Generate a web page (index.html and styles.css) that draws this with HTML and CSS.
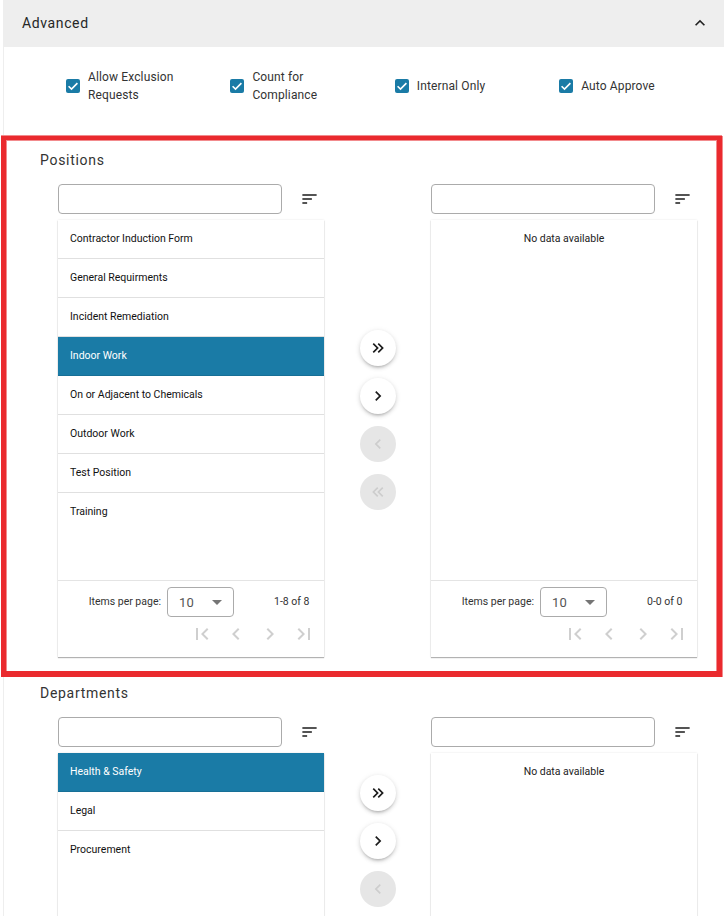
FILE: index.html
```html
<!DOCTYPE html>
<html lang="en">
<head>
<meta charset="utf-8">
<title>Advanced</title>
<link rel="stylesheet" href="styles.css">
</head>
<body>
<svg class="sprite" width="0" height="0" aria-hidden="true">
  <symbol id="i-sort" viewBox="0 0 24 24"><path d="M3 18h6v-2H3v2zM3 6v2h18V6H3zm0 7h12v-2H3v2z"/></symbol>
  <symbol id="i-dr" viewBox="0 0 24 24"><path d="M5.59,7.41L7,6L13,12L7,18L5.59,16.59L10.17,12L5.59,7.41M11.59,7.41L13,6L19,12L13,18L11.59,16.59L16.17,12L11.59,7.41Z"/></symbol>
  <symbol id="i-dl" viewBox="0 0 24 24"><path d="M18.41,7.41L17,6L11,12L17,18L18.41,16.59L13.83,12L18.41,7.41M12.41,7.41L11,6L5,12L11,18L12.41,16.59L7.83,12L12.41,7.41Z"/></symbol>
  <symbol id="i-r" viewBox="0 0 24 24"><path d="M8.59,16.58L13.17,12L8.59,7.41L10,6L16,12L10,18L8.59,16.58Z"/></symbol>
  <symbol id="i-l" viewBox="0 0 24 24"><path d="M15.41,16.58L10.83,12L15.41,7.41L14,6L8,12L14,18L15.41,16.58Z"/></symbol>
  <symbol id="i-first" viewBox="0 0 24 24"><path d="M18.41,16.59L13.82,12L18.41,7.41L17,6L11,12L17,18L18.41,16.59M6,6H8V18H6V6Z"/></symbol>
  <symbol id="i-last" viewBox="0 0 24 24"><path d="M5.59,7.41L10.18,12L5.59,16.59L7,18L13,12L7,6L5.59,7.41M16,6H18V18H16V6Z"/></symbol>
  <symbol id="i-up" viewBox="0 0 24 24"><path d="M12 8l-6 6 1.41 1.41L12 10.83l4.59 4.58L18 14z"/></symbol>
  <symbol id="i-check" viewBox="0 0 14 14"><path d="M2.6 7.2l2.9 2.9 5.9-6" fill="none" stroke="#fff" stroke-width="1.6"/></symbol>
</svg>

<main class="panel">
  <header class="acc-head">
    <span class="acc-title">Advanced</span>
    <svg class="acc-icon"><use href="#i-up"/></svg>
  </header>

  <div class="checks">
    <label class="check"><span class="box"><svg><use href="#i-check"/></svg></span><span>Allow Exclusion Requests</span></label>
    <label class="check"><span class="box"><svg><use href="#i-check"/></svg></span><span>Count for Compliance</span></label>
    <label class="check"><span class="box"><svg><use href="#i-check"/></svg></span><span>Internal Only</span></label>
    <label class="check"><span class="box"><svg><use href="#i-check"/></svg></span><span>Auto Approve</span></label>
  </div>

  <section class="picker">
    <h2 class="picker-title">Positions</h2>
    <div class="picker-body">
      <div class="col">
        <div class="tools"><input class="search" type="text" aria-label="Search"><svg class="sort"><use href="#i-sort"/></svg></div>
        <div class="card">
          <ul class="rows">
            <li class="row">Contractor Induction Form</li>
            <li class="row">General Requirments</li>
            <li class="row">Incident Remediation</li>
            <li class="row selected">Indoor Work</li>
            <li class="row">On or Adjacent to Chemicals</li>
            <li class="row">Outdoor Work</li>
            <li class="row">Test Position</li>
            <li class="row last">Training</li>
          </ul>
          <div class="pager">
            <div class="pager-top"><span class="ipp">Items per page:</span><span class="select"><span>10</span><i class="caret"></i></span><span class="range">1-8 of 8</span></div>
            <div class="pager-nav"><svg><use href="#i-first"/></svg><svg><use href="#i-l"/></svg><svg><use href="#i-r"/></svg><svg><use href="#i-last"/></svg></div>
          </div>
        </div>
      </div>
      <div class="moves">
        <button class="move" type="button" aria-label="Add all"><svg><use href="#i-dr"/></svg></button>
        <button class="move" type="button" aria-label="Add"><svg><use href="#i-r"/></svg></button>
        <button class="move off" type="button" aria-label="Remove"><svg><use href="#i-l"/></svg></button>
        <button class="move off" type="button" aria-label="Remove all"><svg><use href="#i-dl"/></svg></button>
      </div>
      <div class="col">
        <div class="tools"><input class="search" type="text" aria-label="Search"><svg class="sort"><use href="#i-sort"/></svg></div>
        <div class="card">
          <div class="rows"><p class="empty">No data available</p></div>
          <div class="pager">
            <div class="pager-top"><span class="ipp">Items per page:</span><span class="select"><span>10</span><i class="caret"></i></span><span class="range">0-0 of 0</span></div>
            <div class="pager-nav"><svg><use href="#i-first"/></svg><svg><use href="#i-l"/></svg><svg><use href="#i-r"/></svg><svg><use href="#i-last"/></svg></div>
          </div>
        </div>
      </div>
    </div>
  </section>

  <section class="picker short">
    <h2 class="picker-title">Departments</h2>
    <div class="picker-body">
      <div class="col">
        <div class="tools"><input class="search" type="text" aria-label="Search"><svg class="sort"><use href="#i-sort"/></svg></div>
        <div class="card">
          <ul class="rows">
            <li class="row selected">Health &amp; Safety</li>
            <li class="row">Legal</li>
            <li class="row last">Procurement</li>
          </ul>
        </div>
      </div>
      <div class="moves">
        <button class="move" type="button" aria-label="Add all"><svg><use href="#i-dr"/></svg></button>
        <button class="move" type="button" aria-label="Add"><svg><use href="#i-r"/></svg></button>
        <button class="move off" type="button" aria-label="Remove"><svg><use href="#i-l"/></svg></button>
        <button class="move off" type="button" aria-label="Remove all"><svg><use href="#i-dl"/></svg></button>
      </div>
      <div class="col">
        <div class="tools"><input class="search" type="text" aria-label="Search"><svg class="sort"><use href="#i-sort"/></svg></div>
        <div class="card">
          <div class="rows"><p class="empty">No data available</p></div>
        </div>
      </div>
    </div>
  </section>
</main>
<div class="highlight" aria-hidden="true"></div>
</body>
</html>
```

FILE: styles.css
```css
* { box-sizing: border-box; }

html, body {
  margin: 0;
  height: 916px;
  overflow: hidden;
  background: #fff;
}

body {
  position: relative;
  font-family: Roboto, "Liberation Sans", sans-serif;
  color: #212121;
}

.sprite { position: absolute; }

.panel {
  margin-left: 3px;
  border-left: 1px solid #eeeeee;
}

.acc-head {
  height: 47px;
  margin-left: -1px;
  padding: 0 14px 2px 19px;
  background: #eeeeee;
  display: flex;
  align-items: center;
  justify-content: space-between;
}

.acc-title {
  font-size: 14px;
  letter-spacing: 0.62px;
  color: #262626;
}

.acc-icon {
  width: 20px;
  height: 20px;
  fill: #212121;
}

.checks {
  display: grid;
  grid-template-columns: repeat(4, 164.4px);
  padding: 21px 0 46px 62px;
}

.check {
  display: flex;
  align-items: center;
  width: 125px;
  gap: 8px;
  min-height: 36px;
  font-size: 12px;
  line-height: 18px;
  letter-spacing: 0.13px;
  color: #333333;
}

.box {
  flex: none;
  width: 14px;
  height: 14px;
  border-radius: 2px;
  background: #1a7ba6;
}

.box svg {
  display: block;
  width: 14px;
  height: 14px;
}

.picker { padding-bottom: 26px; }

.picker-title {
  margin: 0 0 14px 36px;
  font-size: 14px;
  line-height: 20px;
  font-weight: 400;
  letter-spacing: 0.7px;
  color: #333333;
}

.picker-body {
  display: flex;
  align-items: center;
  padding-left: 54px;
}

.col { width: 266px; flex: none; }

.tools {
  display: flex;
  align-items: center;
  gap: 18px;
  height: 30px;
  margin-bottom: 6px;
}

.search {
  width: 224px;
  height: 30px;
  padding: 0 8px;
  border: 1px solid #ababab;
  border-radius: 4px;
  background: #fff;
  outline: none;
}

.sort {
  width: 19px;
  height: 20px;
  fill: #1c1c1c;
}

.card {
  background: #fff;
  box-shadow: 0 1px 1px rgba(0, 0, 0, 0.28), 0 0 2px rgba(0, 0, 0, 0.1);
}

.rows {
  height: 361px;
  margin: 0;
  padding: 0;
  list-style: none;
  border-bottom: 1px solid #e4e4e4;
}

.short .rows { height: 260px; border-bottom: 0; }

.row {
  height: 39px;
  padding: 0 12px;
  line-height: 37px;
  font-size: 10.5px;
  color: #111111;
  border-bottom: 1px solid #e0e0e0;
}

.row.last { border-bottom: 0; }

.row.selected {
  background: #1a7ba6;
  color: #fff;
  border-bottom-color: #176f96;
}

.empty {
  margin: 0;
  height: 37px;
  line-height: 37px;
  text-align: center;
  font-size: 10.5px;
  color: #222222;
}

.pager { height: 76px; padding: 6px 15px 0 0; }

.pager-top {
  display: flex;
  align-items: center;
  justify-content: flex-end;
  height: 30px;
  font-size: 10.5px;
  color: #333333;
}

.ipp, .range { margin-bottom: 2px; }

.select {
  width: 67px;
  height: 30px;
  margin: 0 40px 0 6px;
  padding: 0 11px;
  border: 1px solid #ababab;
  border-radius: 4px;
  display: flex;
  align-items: center;
  justify-content: space-between;
  font-size: 13px;
  letter-spacing: 0.25px;
  color: #555555;
}

.caret {
  width: 0;
  height: 0;
  border-left: 5px solid transparent;
  border-right: 5px solid transparent;
  border-top: 5px solid #757575;
}

.range { width: 35px; white-space: nowrap; text-align: right; }

.pager-nav {
  display: flex;
  justify-content: flex-end;
  gap: 10px;
  margin: 5px -7px 0 0;
}

.pager-nav svg {
  width: 24px;
  height: 24px;
  fill: #cfcfcf;
}

.moves {
  width: 107px;
  flex: none;
  display: flex;
  flex-direction: column;
  align-items: center;
  gap: 12px;
  padding-bottom: 1px;
}

.short .moves { padding-bottom: 0; }

.move {
  width: 36px;
  height: 36px;
  padding: 0;
  border: 0;
  border-radius: 50%;
  background: #fff;
  display: flex;
  align-items: center;
  justify-content: center;
  fill: #1c1c1c;
  box-shadow: 0 3px 3px -2px rgba(0, 0, 0, 0.2), 0 2px 4px rgba(0, 0, 0, 0.12), 0 1px 6px rgba(0, 0, 0, 0.08);
}

.move svg { width: 20px; height: 20px; }

.move.off {
  background: #e6e6e6;
  fill: #cdcdcd;
  box-shadow: none;
}

.highlight {
  position: absolute;
  left: 1px;
  top: 136px;
  width: 721px;
  height: 541px;
  border-style: solid;
  border-color: #ea2a2e;
  border-width: 4px 5px 6px 5px;
  box-shadow:
    inset 1px 1px 0 #f28b8d,
    inset -1px 0 0 #f28b8d,
    0 -1px 0 #f28b8d,
    1px 0 0 #f28b8d;
  pointer-events: none;
}
```
